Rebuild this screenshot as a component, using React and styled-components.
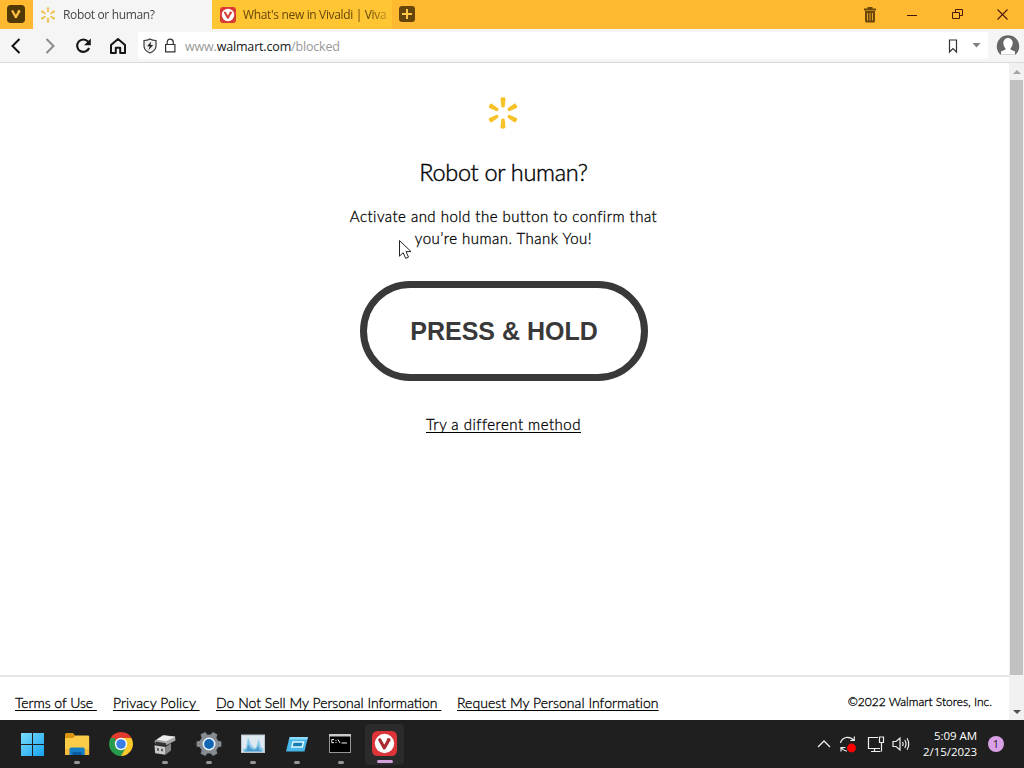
import React from "react"
import styled, { createGlobalStyle } from "styled-components"

const GlobalStyle = createGlobalStyle`
  * {
    box-sizing: border-box;
  }
  body {
    margin: 0;
    overflow: hidden;
    background: #fff;
  }
  svg {
    display: block;
    flex: none;
  }
`

const Screen = styled.div`
  position: relative;
  display: flex;
  flex-direction: column;
  width: 1024px;
  height: 768px;
  overflow: hidden;
  font-family: "Open Sans", "Noto Sans", sans-serif;
`

const TabBar = styled.header`
  display: flex;
  height: 29px;
  background: #ffb931;
`
const MenuButton = styled.div`
  width: 33px;
  padding: 5px 0 0 7px;
`
const Tab = styled.div`
  display: flex;
  align-items: center;
  width: ${p => (p.$active ? 179 : 180)}px;
  padding: 0 5px 0 ${p => (p.$active ? 7 : 8)}px;
  gap: 7px;
  background: ${p => (p.$active ? "#f5f5f5" : "#ffc533")};
  color: ${p => (p.$active ? "#454545" : "#65460b")};
`
const TabTitle = styled.span`
  flex: 1;
  font-size: 12px;
  line-height: 18px;
  letter-spacing: ${p => p.$spacing}px;
  white-space: nowrap;
  mask-image: linear-gradient(to right, #000 88%, rgba(0, 0, 0, 0.35));
`
const NewTab = styled.div`
  flex: 1;
  padding: 6px 0 0 7px;
`
const WindowButtons = styled.div`
  display: flex;
  align-items: center;
`
const WindowButton = styled.div`
  display: flex;
  justify-content: center;
  width: ${p => p.$width}px;
`

const Toolbar = styled.div`
  display: flex;
  align-items: center;
  height: 34px;
  background: #f5f5f5;
  border-bottom: 1px solid #d9d9d9;
`
const NavButton = styled.div`
  display: flex;
  justify-content: center;
  width: 34px;
`
const NavGroup = styled.div`
  display: flex;
  width: 139px;
  margin-left: -1px;
`
const AddressField = styled.div`
  display: flex;
  align-items: center;
  width: 850px;
  height: 27px;
  padding-left: 5px;
  background: #fff;
  border-radius: 2px;
`
const Url = styled.span`
  flex: 1;
  margin: 3px 0 0 3px;
  font-size: 12.5px;
  line-height: 18px;
  letter-spacing: -0.17px;
  color: #999;

  b {
    font-weight: 400;
    color: #161616;
  }
`
const FieldEnd = styled.div`
  display: flex;
  align-items: center;
  gap: 13px;
  margin-right: 7px;
`
const Profile = styled.div`
  flex: 1;
  padding-left: 8px;
`

const Viewport = styled.div`
  display: flex;
  height: 657px;
`
const Page = styled.div`
  display: flex;
  flex-direction: column;
  width: 1009px;
  font-family: Lato, "Open Sans", sans-serif;
  color: #000;
`
const Challenge = styled.main`
  display: flex;
  flex: 1;
  flex-direction: column;
  align-items: center;
  padding: 33px 2px 0 0;
`
const Logo = styled.div`
  margin: 1px 1px 0 0;
`
const Heading = styled.h1`
  margin: 27px 0 0;
  font-size: 23.5px;
  font-weight: 300;
  line-height: 32px;
  letter-spacing: -0.3px;
  -webkit-text-stroke: 0.4px #000;
`
const Message = styled.p`
  margin: 17px 0 0;
  font-size: 15px;
  font-weight: 300;
  line-height: 22px;
  letter-spacing: 0.48px;
  text-align: center;
  -webkit-text-stroke: 0.3px #000;
`
const HoldButton = styled.button`
  width: 288px;
  height: 100px;
  margin: 32px 0 0 1px;
  padding: 0;
  border: 7px solid #393939;
  border-radius: 50px;
  background: #fff;
  color: #393939;
  font: bold 25px "Liberation Sans", sans-serif;
`
const MethodLink = styled.a`
  margin-top: 32px;
  font-size: 15px;
  font-weight: 300;
  line-height: 22px;
  letter-spacing: 0.5px;
  text-decoration: underline;
  text-decoration-thickness: 1px;
  text-underline-offset: 2px;
  text-decoration-skip-ink: none;
  -webkit-text-stroke: 0.3px #000;
`
const Footer = styled.footer`
  display: flex;
  align-items: center;
  height: 45px;
  padding: 9px 17px 0 15px;
  border-top: 2px solid #e6e6e6;
  font-weight: 300;
  -webkit-text-stroke: 0.3px #000;
`
const FooterLink = styled.a`
  width: ${p => p.$width}px;
  margin-right: 16px;
  font-size: 14px;
  line-height: 20px;
  letter-spacing: ${p => p.$spacing}px;
  white-space: pre;
  text-decoration: underline;
  text-decoration-thickness: 1px;
  text-underline-offset: 2px;
  text-decoration-skip-ink: none;
`
const Copyright = styled.span`
  margin: -2px 0 0 auto;
  font-size: 12px;
  line-height: 18px;
`

const Scrollbar = styled.div`
  display: flex;
  flex-direction: column;
  align-items: center;
  width: 15px;
  padding-top: 7px;
  background: #f1f1f1;
`
const Arrow = styled.div`
  border: 4px solid transparent;
  border-top-width: ${p => (p.$up ? 0 : 4)}px;
  border-bottom-width: ${p => (p.$up ? 4 : 0)}px;
  border-${p => (p.$up ? "bottom" : "top")}-color: ${p => (p.$up ? "#a3a3a3" : "#505050")};
`
const Thumb = styled.div`
  width: 13px;
  height: 595px;
  margin: 6px 0 35px;
  background: #c1c1c1;
`

const Taskbar = styled.div`
  display: flex;
  height: 48px;
  background: #1f1f1f;
  color: #fff;
`
const Apps = styled.div`
  display: flex;
  padding-left: 13px;
`
const AppSlot = styled.div`
  display: flex;
  flex-direction: column;
  align-items: center;
  width: 39px;
  height: 41px;
  margin: 4px 5px 0 0;
  padding-top: 7px;
  border-radius: 4px;
  background: ${p => (p.$active ? "#2b2b2b" : "transparent")};
`
const Running = styled.div`
  width: ${p => (p.$active ? 16 : 6)}px;
  height: 3px;
  margin-top: 4px;
  border-radius: 2px;
  background: ${p => (p.$active ? "#d3a0dc" : "#969696")};
`
const Tray = styled.div`
  display: flex;
  align-items: center;
  margin-left: auto;
  padding-right: 20px;
`
const TrayIcons = styled.div`
  display: flex;
  align-items: center;
  margin-right: 11px;

  svg + svg {
    margin-left: 7px;
  }
  svg:nth-child(3) {
    margin-left: 9px;
  }
`
const Clock = styled.div`
  width: 56px;
  font-size: 11.5px;
  line-height: 16px;
  letter-spacing: -0.05px;
  text-align: right;
  white-space: nowrap;
`
const Badge = styled.div`
  width: 16px;
  height: 16px;
  margin-left: 11px;
  border-radius: 50%;
  background: #d9a0e5;
  color: #2c1830;
  font-size: 11px;
  line-height: 16px;
  text-align: center;
`

// The mouse pointer floats above the page
const Pointer = styled.svg`
  position: absolute;
  left: 398px;
  top: 239px;
`

const Spark = ({ size, color = "#f5c227" }) => (
  <svg width={size} height={size} viewBox="-16 -16 32 32" fill={color}>
    {[0, 60, 120, 180, 240, 300].map(angle => (
      <path
        key={angle}
        transform={`rotate(${angle})`}
        d="M-2.5-14.3C-2.5-16.2 2.5-16.2 2.5-14.3L1.7-6.3C1.2-5.2-1.2-5.2-1.7-6.3Z"
      />
    ))}
  </svg>
)

const Vivaldi = ({ size, bg, disc, mark }) => (
  <svg width={size} height={size} viewBox="0 0 24 24">
    <rect width="24" height="24" rx="5" fill={bg} />
    <circle cx="12" cy="12" r="9.3" fill={disc} />
    <path
      d="M7.4 8.4 11.8 16.2 15.2 10.2"
      fill="none"
      stroke={mark}
      strokeWidth="3"
      strokeLinecap="round"
      strokeLinejoin="round"
    />
    <circle cx="16" cy="8.6" r="1.9" fill={mark} />
  </svg>
)

const StartIcon = () => (
  <svg width="25" height="26" viewBox="0 0 25 26">
    <defs>
      <linearGradient id="start" x1="0" y1="0" x2="1" y2="1">
        <stop offset="0" stopColor="#7bdcfb" />
        <stop offset="1" stopColor="#16a3ef" />
      </linearGradient>
    </defs>
    <path
      fill="url(#start)"
      d="M1 2h11v11H1zM13 2h11v11H13zM1 14h11v11H1zM13 14h11v11H13z"
    />
  </svg>
)

const FolderIcon = () => (
  <svg width="26" height="26" viewBox="0 0 26 26">
    <path d="M1 3.5Q1 2 2.5 2H9l2.5 3V9H1z" fill="#d99512" />
    <path d="M1 7h8l2.5-2.5H24q1.2 0 1.2 1.3V24H1z" fill="#fccb47" />
    <path d="M1 18h24v6H1z" fill="#f4b83a" />
    <path d="M5.5 24v-6q0-1.6 1.6-1.6h12q1.6 0 1.6 1.6v6z" fill="#167ec4" />
    <path d="M8.5 24v-2.8h9V24z" fill="#0b5a9d" />
  </svg>
)

const ChromeIcon = () => (
  <svg width="26" height="26" viewBox="-13 -13 26 26">
    <path d="M0 0-10.39-6A12 12 0 0 1 10.39-6z" fill="#df3b2e" />
    <path d="M0 0 10.39-6A12 12 0 0 1 0 12z" fill="#fbc92b" />
    <path d="M0 0V12A12 12 0 0 1-10.39-6z" fill="#269b4b" />
    <path d="M0-6H10.4L5.2 3z" fill="#fbc92b" />
    <path d="M0-6H10.39A12 12 0 0 0 3-11.6z" fill="#df3b2e" />
    <path d="M-5.2 3-10.39-6-6-6z" fill="#269b4b" />
    <path d="M5.2 3 0 12-3.5 5z" fill="#269b4b" />
    <circle r="6.2" fill="#fff" />
    <circle r="4.8" fill="#397fe6" />
  </svg>
)

const DeviceIcon = () => (
  <svg width="26" height="26" viewBox="0 0 26 26">
    <path d="M2.5 10 11 4 23 5.5 23.5 9.5 14.5 14 3 12.5z" fill="#a9a9a9" />
    <path d="m4.5 8.5 7-4 12 1.2L14 10.3z" fill="#ededed" />
    <path d="m3.5 10.5 10.5 1.8v3.2L3.5 13.4z" fill="#343434" />
    <path d="m2.5 14.2 11 1.8v7.8l-10.4-1.6z" fill="#c9c9c9" />
    <path d="m13.5 16 5.5-4v7.4l-5.5 4.4z" fill="#858585" />
    <path d="m5 17 1.9.4v2.5L5 19.6zM9 17.7l1.9.4v2.4L9 20.1z" fill="#555" />
  </svg>
)

const SettingsIcon = () => (
  <svg width="26" height="26" viewBox="-13 -13 26 26">
    <g fill="#858b90">
      {[30, 90, 150, 210, 270, 330].map(angle => (
        <path
          key={angle}
          transform={`rotate(${angle})`}
          d="m-3.5-8 .9-4.4h5.2l.9 4.4z"
        />
      ))}
      <circle r="9.6" />
    </g>
    <circle r="6.5" fill="#e8f2fa" />
    <circle r="4.9" fill="#1267b4" />
  </svg>
)

const MonitorIcon = () => (
  <svg width="26" height="26" viewBox="0 0 26 26">
    <rect x="1.5" y="4" width="23" height="17.5" fill="#dee9f1" stroke="#bdc5ca" />
    <path
      d="M3 20.5V18l3-1L8 6.5l3 7 2.5 3 2.5.5L18.5 8l2.5 8 2.5 2v2.5z"
      fill="#8dcaea"
    />
    <path d="M4 20.5 7 18l1-5 2 3.5 3 2 3 0 2-4 1.5 4 3 2z" fill="#4a9acc" />
  </svg>
)

const RunIcon = () => (
  <svg width="26" height="26" viewBox="0 0 26 26">
    <path d="M5.5 6H24l-3.5 14.5H2z" fill="#47b6e8" />
    <path d="M6 6h18l-.7 2.5H5.4z" fill="#8adafa" />
    <path
      d="M9 11h10.5l-1.3 5H7.8z"
      fill="#167cb4"
      stroke="#e1f8ff"
      strokeWidth="1.5"
    />
  </svg>
)

const ConsoleIcon = () => (
  <svg width="25" height="26" viewBox="0 0 25 26">
    <rect x="1.5" y="3.5" width="21" height="18" fill="#000" stroke="#969696" />
    <path d="M1 3h22v2.5H1z" fill="#cacaca" />
    <path
      d="M6 8.5H3.8v3.2H6M8 9v1M8 11v1M10 8.5l2 3.5M13.5 12H19"
      fill="none"
      stroke="#eee"
      strokeWidth="1"
    />
  </svg>
)

const apps = [
  { name: "start", icon: <StartIcon /> },
  { name: "files", icon: <FolderIcon />, running: true },
  { name: "chrome", icon: <ChromeIcon /> },
  { name: "device", icon: <DeviceIcon />, running: true },
  { name: "settings", icon: <SettingsIcon />, running: true },
  { name: "monitor", icon: <MonitorIcon />, running: true },
  { name: "run", icon: <RunIcon />, running: true },
  { name: "console", icon: <ConsoleIcon />, running: true },
  {
    name: "vivaldi",
    icon: <Vivaldi size={25} bg="#dc3439" disc="#fff" mark="#a92b31" />,
    running: true,
    active: true,
  },
]

const footerLinks = [
  { text: "Terms of Use ", width: 82, spacing: -0.05 },
  { text: "Privacy Policy ", width: 87, spacing: 0.07 },
  { text: "Do Not Sell My Personal Information ", width: 225, spacing: 0 },
  { text: "Request My Personal Information", width: 202, spacing: 0.04 },
]

const BrowserTabs = () => (
  <TabBar>
    <MenuButton>
      <Vivaldi size={18} bg="#503906" disc="#503906" mark="#ffc146" />
    </MenuButton>
    <Tab $active>
      <Spark size={16} color="#efc45a" />
      <TabTitle $spacing={-0.35}>Robot or human?</TabTitle>
    </Tab>
    <Tab>
      <Vivaldi size={16} bg="#d93a35" disc="#fff" mark="#d93a35" />
      <TabTitle $spacing={-0.34}>What's new in Vivaldi | Viva</TabTitle>
    </Tab>
    <NewTab>
      <svg width="16" height="16" viewBox="0 0 16 16">
        <rect width="16" height="16" rx="3" fill="#654509" />
        <path d="M8 3v10M3 8h10" stroke="#ffc647" strokeWidth="2" />
      </svg>
    </NewTab>
    <WindowButtons>
      <WindowButton $width={38}>
        <svg width="14" height="17" viewBox="0 0 14 17" fill="#6b4708">
          <path d="M4.5 1h5v1.5H13v2H1v-2h3.5z" />
          <path d="M2 5h10v10q0 1.5-1.5 1.5h-7Q2 16.5 2 15z" />
          <path
            d="M4.5 7v7.5M7 7v7.5M9.5 7v7.5"
            stroke="#e2a12c"
            strokeWidth="1"
          />
        </svg>
      </WindowButton>
      <WindowButton $width={45}>
        <svg width="10" height="10" stroke="#49180d">
          <path d="M0 5.5h10" />
        </svg>
      </WindowButton>
      <WindowButton $width={47}>
        <svg width="11" height="11" fill="none" stroke="#49180d">
          <path d="M.5 3.5h7v6h-7zM3.5 3.5v-3h7v6h-3" />
        </svg>
      </WindowButton>
      <WindowButton $width={43}>
        <svg width="11" height="11" stroke="#49180d" strokeWidth="1.1">
          <path d="m.5.5 10 10M10.5.5l-10 10" />
        </svg>
      </WindowButton>
    </WindowButtons>
  </TabBar>
)

const AddressBar = () => (
  <Toolbar>
    <NavGroup>
      <NavButton>
        <svg width="18" height="18" fill="none" stroke="#111" strokeWidth="2">
          <path d="M12.5 2 5.5 9l7 7" />
        </svg>
      </NavButton>
      <NavButton>
        <svg width="18" height="18" fill="none" stroke="#8b8b8b" strokeWidth="2">
          <path d="m5.5 2 7 7-7 7" />
        </svg>
      </NavButton>
      <NavButton>
        <svg width="18" height="18" viewBox="0 0 18 18">
          <path
            d="M13.1 4.7A6.2 6.2 0 1 0 14.1 11"
            fill="none"
            stroke="#151515"
            strokeWidth="2.1"
          />
          <path d="M15.8 1.5v6.8H9z" fill="#151515" />
        </svg>
      </NavButton>
      <NavButton>
        <svg width="18" height="18" viewBox="0 0 18 18">
          <path
            d="M2 8v8h4.8v-5.2h4.4V16H16V8L9 2z"
            fill="none"
            stroke="#151515"
            strokeWidth="2"
            strokeLinejoin="round"
          />
        </svg>
      </NavButton>
    </NavGroup>
    <AddressField>
      <svg width="14" height="16" viewBox="0 0 14 16">
        <path
          d="M1 2.5Q4.5 2.5 7 1q2.5 1.5 6 1.5V8q0 4.5-6 7Q1 12.5 1 8z"
          fill="#f1f1f1"
          stroke="#393939"
          strokeWidth="1.2"
        />
        <path d="M8.3 3.4 4 8.3h2.7L5.4 12.2 10.2 7H7.5z" fill="#222" />
      </svg>
      <svg
        width="25"
        height="16"
        viewBox="-8 0 25 16"
        fill="none"
        stroke="#333"
        strokeWidth="1.2"
      >
        <path d="M.6 6.5h9.3v7.4H.6zM2.2 6.5V4.3q0-3.1 3-3.1t3.1 3.1v2.2" />
      </svg>
      <Url>
        www.<b>walmart.com</b>/blocked
      </Url>
      <FieldEnd>
        <svg width="12" height="16" fill="none" stroke="#333" strokeWidth="1.2">
          <path d="M2.5 2h7v12L6 10.5 2.5 14z" />
        </svg>
        <svg width="9" height="5" fill="#828282">
          <path d="M.5 0h8l-4 4.5z" />
        </svg>
      </FieldEnd>
    </AddressField>
    <Profile>
      <svg width="24" height="24" viewBox="0 0 24 24">
        <path
          d="M4.2 20.5A11.2 11.2 0 1 1 19.8 20.5z"
          fill="#666"
        />
        <path
          d="M7.3 9a4.7 5 0 0 1 9.4 0c0 2.3-1 4.2-2.2 5.2v1.3l4.5 2v3H5v-3l4.5-2v-1.3C8.3 13.2 7.3 11.3 7.3 9"
          fill="#fff"
        />
      </svg>
    </Profile>
  </Toolbar>
)

const BlockedPage = () => (
  <Page>
    <Challenge>
      <Logo>
        <Spark size={32} />
      </Logo>
      <Heading>Robot or human?</Heading>
      <Message>
        Activate and hold the button to confirm that
        <br />
        you’re human. Thank You!
      </Message>
      <HoldButton>PRESS &amp; HOLD</HoldButton>
      <MethodLink>Try a different method</MethodLink>
    </Challenge>
    <Footer>
      {footerLinks.map(({ text, width, spacing }) => (
        <FooterLink key={text} $width={width} $spacing={spacing}>
          {text}
        </FooterLink>
      ))}
      <Copyright>©2022 Walmart Stores, Inc.</Copyright>
    </Footer>
  </Page>
)

const SystemTray = () => (
  <Tray>
    <TrayIcons>
      <svg width="14" height="10" fill="none" stroke="#eee" strokeWidth="1.3">
        <path d="m1 8 6-6 6 6" />
      </svg>
      <svg
        width="20"
        height="18"
        viewBox="0 0 20 18"
        fill="none"
        stroke="#eee"
        strokeWidth="1.2"
      >
        <path d="M2.5 8Q3.5 3 9 2.3 13 2 16 5.5M16.3 1.5v4h-4M3 16.5v-4h4.5M3.2 12.5Q6 16 9 16" />
        <circle cx="13.5" cy="13" r="3.8" fill="#f00" stroke="#f00" />
      </svg>
      <svg
        width="18"
        height="18"
        viewBox="0 0 18 18"
        fill="none"
        stroke="#eee"
        strokeWidth="1.2"
      >
        <path d="M11 2.5H1.5v11H13M7.5 13.5v3M4 16.5h9.5M12.5 2h4v5.5h-4zM14.5 7.5v9" />
      </svg>
      <svg
        width="18"
        height="18"
        viewBox="0 0 18 18"
        fill="none"
        stroke="#eee"
        strokeWidth="1.2"
      >
        <path d="M1 6.5h3l4-3.5v12l-4-3.5H1zM10.5 7q1.2 2 0 4M12.7 5q2.7 4 0 8M15 3.3q3.5 5.7 0 11.4" />
      </svg>
    </TrayIcons>
    <Clock>
      5:09 AM
      <br />
      2/15/2023
    </Clock>
    <Badge>1</Badge>
  </Tray>
)

const App = () => (
  <Screen>
    <GlobalStyle />
    <BrowserTabs />
    <AddressBar />
    <Viewport>
      <BlockedPage />
      <Scrollbar>
        <Arrow $up />
        <Thumb />
        <Arrow />
      </Scrollbar>
    </Viewport>
    <Taskbar>
      <Apps>
        {apps.map(({ name, icon, running, active }) => (
          <AppSlot key={name} $active={active}>
            {icon}
            {running && <Running $active={active} />}
          </AppSlot>
        ))}
      </Apps>
      <SystemTray />
    </Taskbar>
    <Pointer width="14" height="21" viewBox="0 0 14 21">
      <path
        d="M1.5 1.5v15.7l3.6-3.5 2.6 5.7 2.8-1.3L8 12.6h5z"
        fill="#fff"
        stroke="#222"
      />
    </Pointer>
  </Screen>
)

export default App
